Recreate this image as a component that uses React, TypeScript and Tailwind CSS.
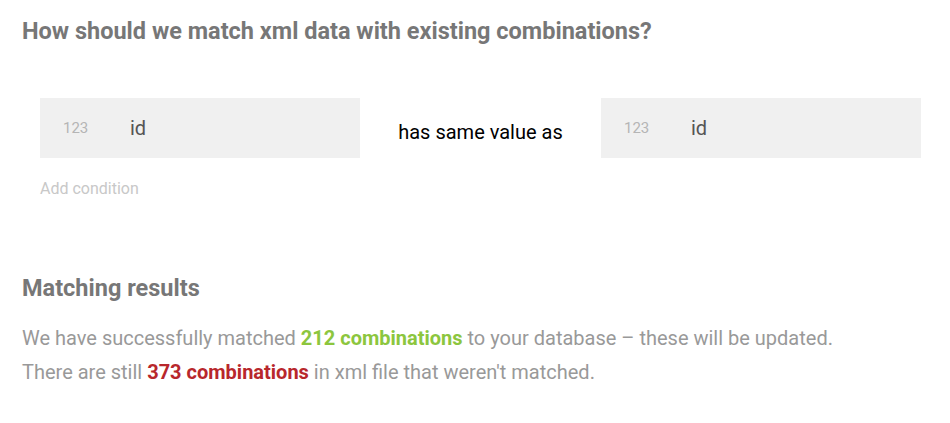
import React from "react";

function Field() {
  return (
    <div className="flex h-[60px] w-[320px] items-center bg-[#f0f0f0]">
      <span className="ml-[23px] w-[67px] text-[15px] text-[#b5b5b5]">123</span>
      <span className="text-[20px] text-[#555]">id</span>
    </div>
  );
}

export default function App() {
  return (
    <div className="min-h-[423px] w-[950px] bg-white pl-[22px] pt-[17px]" style={{ fontFamily: "Roboto, 'Liberation Sans', sans-serif" }}>
      <h1 className="text-[23.5px] font-bold leading-[28px] text-[#777]">
        How should we match xml data with existing combinations?
      </h1>
      <div className="ml-[18px] mt-[53px] flex w-[881px] items-center">
        <Field />
        <div className="flex flex-1 justify-center pt-[8px] text-[20px] text-black">has same value as</div>
        <Field />
      </div>
      <div className="ml-[18px] mt-[21px] text-[16px] leading-[20px] text-[#c8c8c8]">Add condition</div>
      <h2 className="mt-[75px] text-[23.5px] font-bold leading-[28px] text-[#777]">Matching results</h2>
      <div className="mt-[19px] text-[20px] leading-[34px] text-[#999]">
        <p>
          We have successfully matched <span className="font-bold text-[#8cc63e]">212 combinations</span> to your database – these will be updated.
        </p>
        <p>
          There are still <span className="font-bold text-[#b8272c]">373 combinations</span> in xml file that weren't matched.
        </p>
      </div>
    </div>
  );
}
